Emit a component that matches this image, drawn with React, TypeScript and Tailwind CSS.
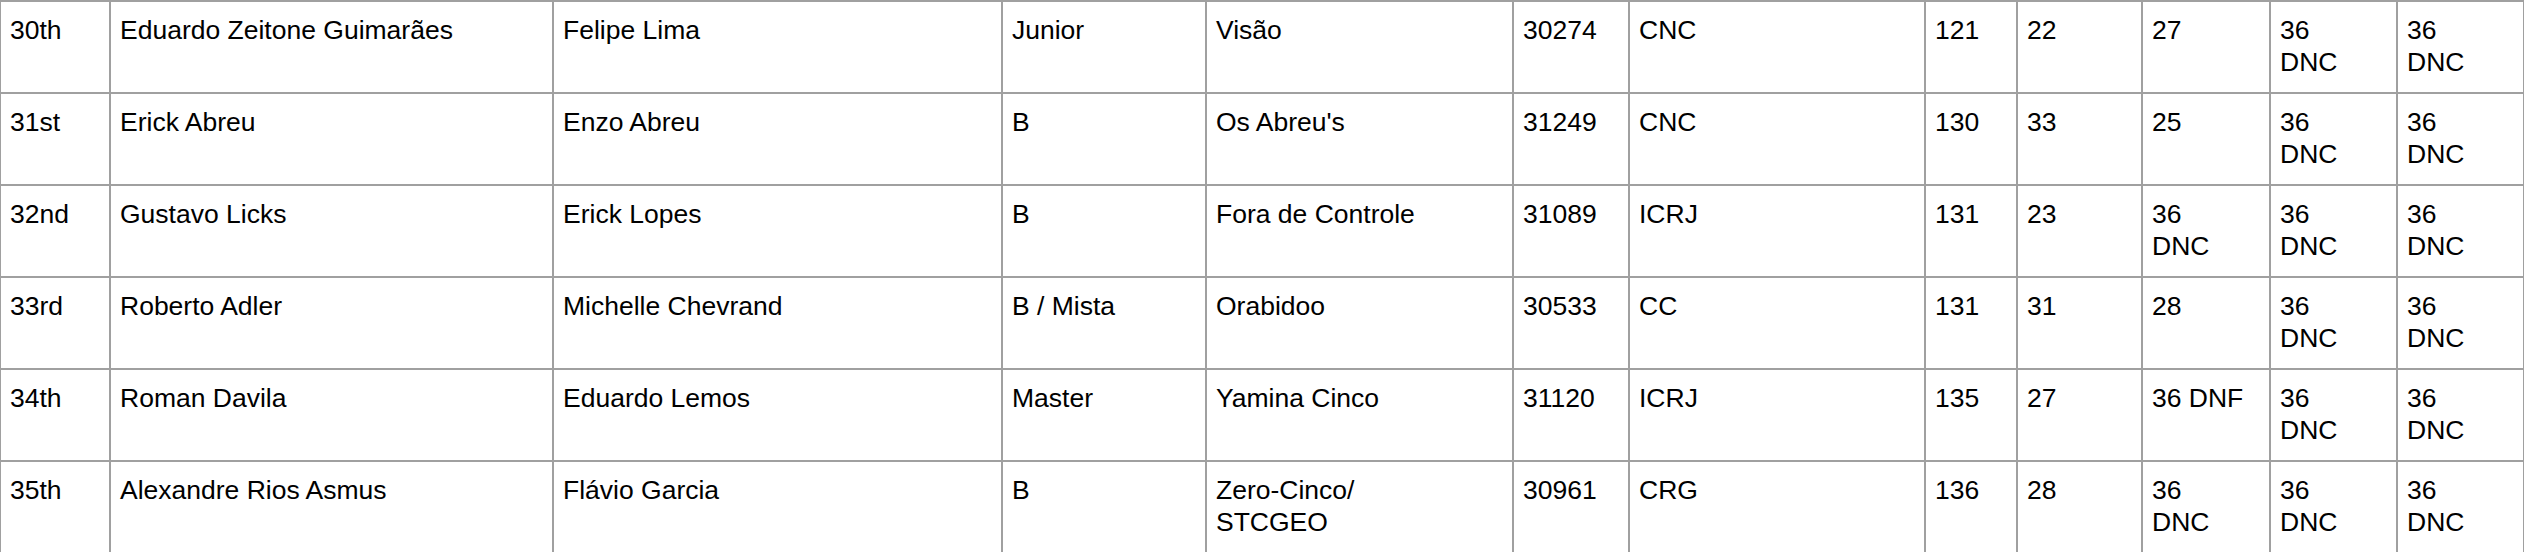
import React from "react";

type Cell = string | string[];

const rows: Cell[][] = [
  ["30th", "Eduardo Zeitone Guimarães", "Felipe Lima", "Junior", "Visão", "30274", "CNC", "121", "22", "27", ["36", "DNC"], ["36", "DNC"]],
  ["31st", "Erick Abreu", "Enzo Abreu", "B", "Os Abreu's", "31249", "CNC", "130", "33", "25", ["36", "DNC"], ["36", "DNC"]],
  ["32nd", "Gustavo Licks", "Erick Lopes", "B", "Fora de Controle", "31089", "ICRJ", "131", "23", ["36", "DNC"], ["36", "DNC"], ["36", "DNC"]],
  ["33rd", "Roberto Adler", "Michelle Chevrand", "B / Mista", "Orabidoo", "30533", "CC", "131", "31", "28", ["36", "DNC"], ["36", "DNC"]],
  ["34th", "Roman Davila", "Eduardo Lemos", "Master", "Yamina Cinco", "31120", "ICRJ", "135", "27", "36 DNF", ["36", "DNC"], ["36", "DNC"]],
  ["35th", "Alexandre Rios Asmus", "Flávio Garcia", "B", ["Zero-Cinco/", "STCGEO"], "30961", "CRG", "136", "28", ["36", "DNC"], ["36", "DNC"], ["36", "DNC"]],
];

export default function App() {
  return (
    <div
      className="w-[2524px] h-[552px] overflow-hidden bg-white text-black border-t border-[#a0a0a0]"
      style={{ fontFamily: '"Liberation Sans", Arial, sans-serif' }}
    >
      <table className="table-fixed border-separate border-spacing-0 w-[2524px] text-[26.5px] leading-[32px]">
        <colgroup>
          <col className="w-[110px]" />
          <col className="w-[443px]" />
          <col className="w-[449px]" />
          <col className="w-[204px]" />
          <col className="w-[307px]" />
          <col className="w-[116px]" />
          <col className="w-[296px]" />
          <col className="w-[92px]" />
          <col className="w-[125px]" />
          <col className="w-[128px]" />
          <col className="w-[127px]" />
          <col className="w-[127px]" />
        </colgroup>
        <tbody>
          {rows.map((r, i) => (
            <tr key={i}>
              {r.map((c, j) => (
                <td
                  key={j}
                  className="align-top border border-[#a0a0a0] h-[92px] pl-[9px] pr-[6px] pt-[12px] pb-[14px] whitespace-nowrap overflow-hidden"
                >
                  {Array.isArray(c) ? (
                    <>
                      {c[0]}
                      <br />
                      {c[1]}
                    </>
                  ) : (
                    c
                  )}
                </td>
              ))}
            </tr>
          ))}
        </tbody>
      </table>
    </div>
  );
}
